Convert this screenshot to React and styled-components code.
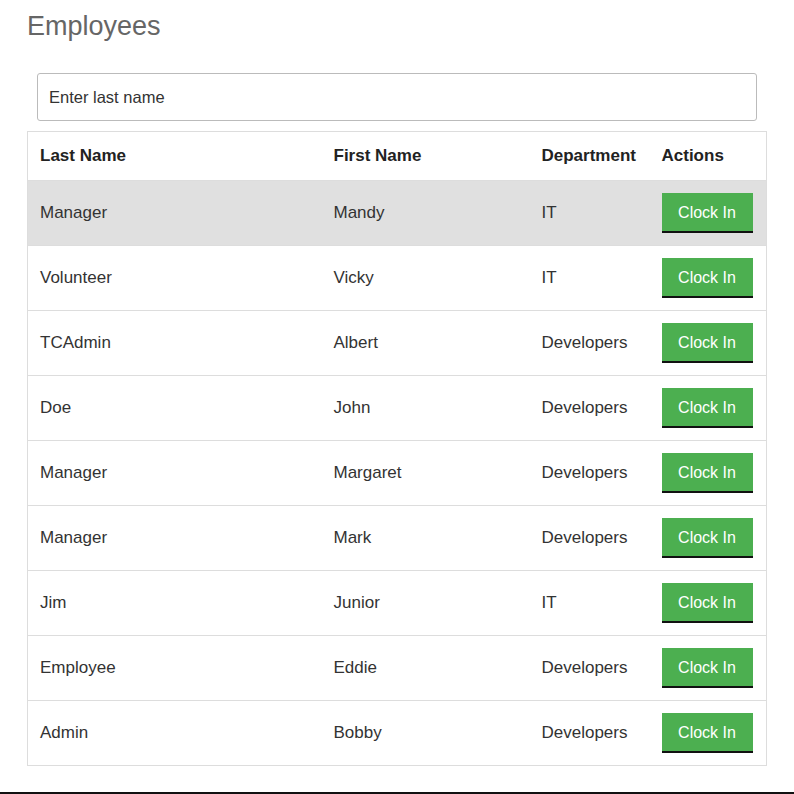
import React from "react";
import styled, { createGlobalStyle } from "styled-components";

const Global = createGlobalStyle`
  html, body { margin: 0; padding: 0; background: #fff; }
  body { font-family: "Liberation Sans", Arial, sans-serif; color: #333; }
`;

const Page = styled.div`
  width: 794px;
  height: 794px;
  box-sizing: border-box;
  display: flex;
  flex-direction: column;
  border-bottom: 2px solid #111;
`;

const Main = styled.main`
  padding: 10px 27px 0 27px;
  flex: 1;
`;

const Title = styled.h1`
  margin: 0 0 31px 0;
  font-size: 27px;
  line-height: 32px;
  font-weight: 400;
  color: #666;
`;

const SearchWrap = styled.div`
  padding: 0 10px;
  margin-bottom: 10px;
`;

const Search = styled.input`
  display: block;
  box-sizing: border-box;
  width: 100%;
  height: 48px;
  border: 1px solid #bbb;
  border-radius: 3px;
  padding: 0 11px;
  font-family: "Liberation Sans", Arial, sans-serif;
  font-size: 16.5px;
  color: #333;
  outline: none;
  &::placeholder { color: #333; opacity: 1; }
`;

const Table = styled.table`
  width: 739px;
  border-collapse: collapse;
  border: 1px solid #ddd;
  table-layout: fixed;
  font-size: 17px;
`;

const HeadCell = styled.th`
  text-align: left;
  font-weight: 700;
  color: #222;
  height: 48px;
  padding: 0 12px;
  vertical-align: middle;
  border-bottom: 1px solid #ddd;
`;

const Row = styled.tr`
  background: ${(p) => (p.$active ? "#e0e0e0" : "#fff")};
  border-bottom: 1px solid #ddd;
`;

const Cell = styled.td`
  height: 64px;
  padding: 0 12px;
  vertical-align: middle;
  color: #333;
`;

const Button = styled.button`
  display: block;
  width: 91px;
  height: 40px;
  border: 0;
  border-bottom: 2px solid #111;
  border-radius: 0;
  background: #4caf50;
  color: #fff;
  font-family: "Liberation Sans", Arial, sans-serif;
  font-size: 16px;
  padding: 2px 0 0 0;
  cursor: pointer;
`;

const employees = [
  ["Manager", "Mandy", "IT"],
  ["Volunteer", "Vicky", "IT"],
  ["TCAdmin", "Albert", "Developers"],
  ["Doe", "John", "Developers"],
  ["Manager", "Margaret", "Developers"],
  ["Manager", "Mark", "Developers"],
  ["Jim", "Junior", "IT"],
  ["Employee", "Eddie", "Developers"],
  ["Admin", "Bobby", "Developers"],
];

export default function App() {
  return (
    <>
      <Global />
      <Page>
        <Main>
          <Title>Employees</Title>
          <SearchWrap>
            <Search placeholder="Enter last name" />
          </SearchWrap>
          <Table>
            <colgroup>
              <col style={{ width: 294 }} />
              <col style={{ width: 208 }} />
              <col style={{ width: 120 }} />
              <col style={{ width: 117 }} />
            </colgroup>
            <thead>
              <tr>
                <HeadCell>Last Name</HeadCell>
                <HeadCell>First Name</HeadCell>
                <HeadCell>Department</HeadCell>
                <HeadCell>Actions</HeadCell>
              </tr>
            </thead>
            <tbody>
              {employees.map(([last, first, dept], i) => (
                <Row key={i} $active={i === 0}>
                  <Cell>{last}</Cell>
                  <Cell>{first}</Cell>
                  <Cell>{dept}</Cell>
                  <Cell>
                    <Button>Clock In</Button>
                  </Cell>
                </Row>
              ))}
            </tbody>
          </Table>
        </Main>
      </Page>
    </>
  );
}
